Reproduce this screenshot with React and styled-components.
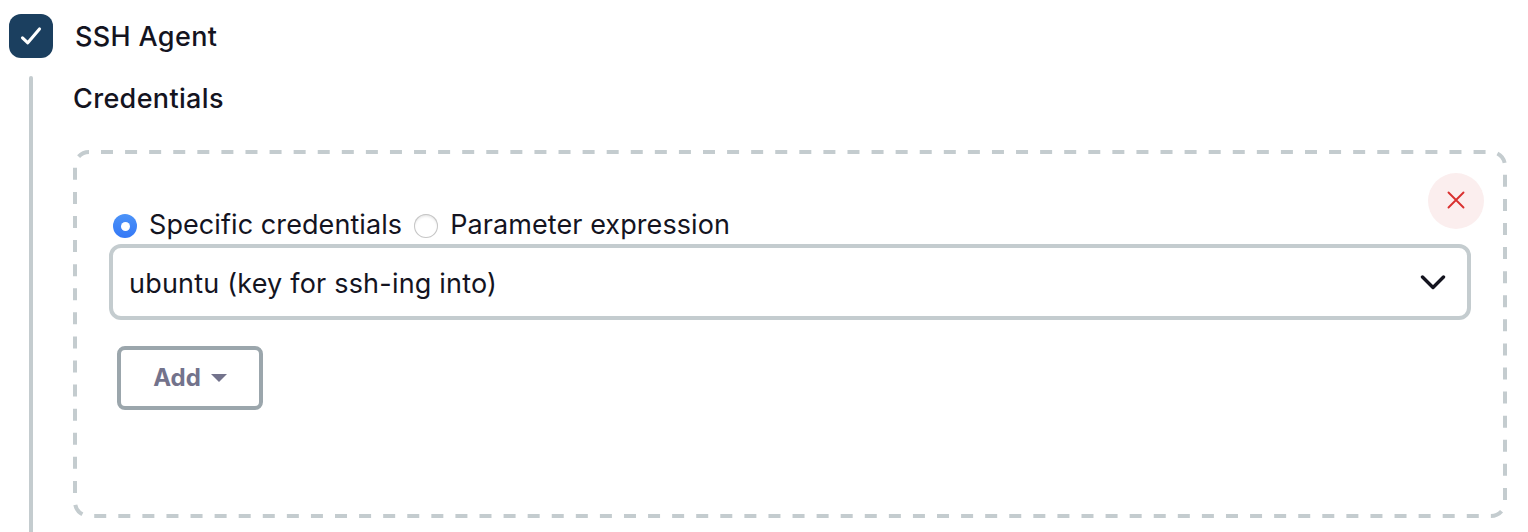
import React from "react";
import styled, { createGlobalStyle } from "styled-components";

const Global = createGlobalStyle`
  * { box-sizing: border-box; }
  body { margin: 0; background: #fff; color: #14141f; overflow: hidden;
    font-family: Inter, "Liberation Sans", sans-serif; font-size: 27px; line-height: 36px; }
`;
const Page = styled.main`
  height: 532px; overflow: hidden; padding: 14px 21px 0 9px;
  display: flex; flex-direction: column;
`;
const Header = styled.label`
  display: flex; align-items: center; height: 44px; gap: 22px;
`;
const CheckBox = styled.span`
  width: 44px; height: 44px; border-radius: 12px; background: #1b3f5f;
  display: flex; align-items: center; justify-content: center;
`;
const Label = styled.span`
  font-weight: ${(p) => p.$weight || 400};
  letter-spacing: ${(p) => p.$spacing || 0}px;
  padding-top: ${(p) => p.$drop || 0}px;
  white-space: nowrap;
`;
const Body = styled.section`
  display: flex; flex: 1; margin-top: 18px; padding-left: 20px; gap: 40px;
`;
const Rail = styled.div`
  width: 4px; height: 500px; border-radius: 2px; background: #c4cccf; flex: none;
`;
const Content = styled.div`
  flex: 1; display: flex; flex-direction: column; padding-top: 5px;
`;
const Panel = styled.div`
  position: relative; height: 368px; margin-top: 33px; padding: 56px 36px 0;
  display: flex; flex-direction: column; align-items: stretch;
`;
const DashedOutline = styled.svg`
  position: absolute; left: 0; top: 0; pointer-events: none;
`;
const RemoveButton = styled.button`
  position: absolute; right: 23px; top: 23px; width: 56px; height: 56px; padding: 0 0 2px;
  border: 0; border-radius: 50%; background: #fbeeee;
  display: flex; align-items: center; justify-content: center;
`;
const Options = styled.div`
  display: flex; align-items: center; height: 38px; padding-left: 4px; gap: 12px;
`;
const Option = styled.label`
  display: flex; align-items: center; gap: 12px;
`;
const Radio = styled.span`
  width: 24px; height: 24px; border-radius: 50%; margin-top: 2px;
  display: flex; align-items: center; justify-content: center;
  background: ${(p) => (p.$on ? "linear-gradient(#4c93f8, #3478f6)" : "#fff")};
  box-shadow: ${(p) => (p.$on ? "none" : "inset 0 0 0 1px #c6c6c6, inset 0 2px 3px rgba(0,0,0,.12)")};
  &::after {
    content: ""; width: 9px; height: 9px; border-radius: 50%; background: #fff;
    display: ${(p) => (p.$on ? "block" : "none")};
  }
`;
const Select = styled.div`
  height: 76px; border: 4px solid #c4cccf; border-radius: 12px;
  padding: 2px 21px 0 16px; display: flex; align-items: center; justify-content: space-between;
`;
const Chevron = styled.svg`
  margin-bottom: 1px;
`;
const AddButton = styled.button`
  width: 146px; height: 64px; margin: 26px 0 0 8px; padding: 0;
  border: 4px solid #9ba6ac; border-radius: 8px; background: transparent; color: #73738c;
  font: 700 24px/30px Inter, "Liberation Sans", sans-serif;
  display: flex; align-items: center; justify-content: center; gap: 10px;
`;

export default function App() {
  return (
    <>
      <Global />
      <Page>
        <Header>
          <CheckBox>
            <svg width="22" height="20" viewBox="0 0 22 20" fill="none" stroke="#fff" strokeWidth="3.1" strokeLinecap="round" strokeLinejoin="round">
              <path d="M2.5 11.8 7.8 16.8 19.5 3" />
            </svg>
          </CheckBox>
          <Label $weight={500} $spacing={0.35} $drop={2}>SSH Agent</Label>
        </Header>
        <Body>
          <Rail />
          <Content>
            <Label $weight={500} $spacing={0.34}>Credentials</Label>
            <Panel>
              <DashedOutline width="1434" height="368" fill="none" stroke="#c4cccf" strokeWidth="4">
                <rect x="2" y="2" width="1430" height="364" rx="14" strokeDasharray="12 12.08" strokeDashoffset="-12" />
              </DashedOutline>
              <RemoveButton aria-label="Remove">
                <svg width="18" height="18" viewBox="0 0 18 18" stroke="#d9302f" strokeWidth="1.9" strokeLinecap="round">
                  <path d="M1.5 1.5 16.5 16.5M16.5 1.5 1.5 16.5" />
                </svg>
              </RemoveButton>
              <Options>
                <Option><Radio $on /><Label $spacing={0.08}>Specific credentials</Label></Option>
                <Option><Radio /><Label $spacing={0.08}>Parameter expression</Label></Option>
              </Options>
              <Select>
                <Label $spacing={0.2} $drop={2}>ubuntu (key for ssh-ing into)</Label>
                <Chevron width="26" height="16" viewBox="0 0 26 16" fill="none" stroke="#14141f" strokeWidth="3.4" strokeLinecap="round" strokeLinejoin="round">
                  <path d="M2.5 2 13 12.5 23.5 2" />
                </Chevron>
              </Select>
              <AddButton>
                <Label $weight={700}>Add</Label>
                <svg width="16" height="8" viewBox="0 0 16 8" fill="#73738c"><path d="M0 0H16L8 8Z" /></svg>
              </AddButton>
            </Panel>
          </Content>
        </Body>
      </Page>
    </>
  );
}
